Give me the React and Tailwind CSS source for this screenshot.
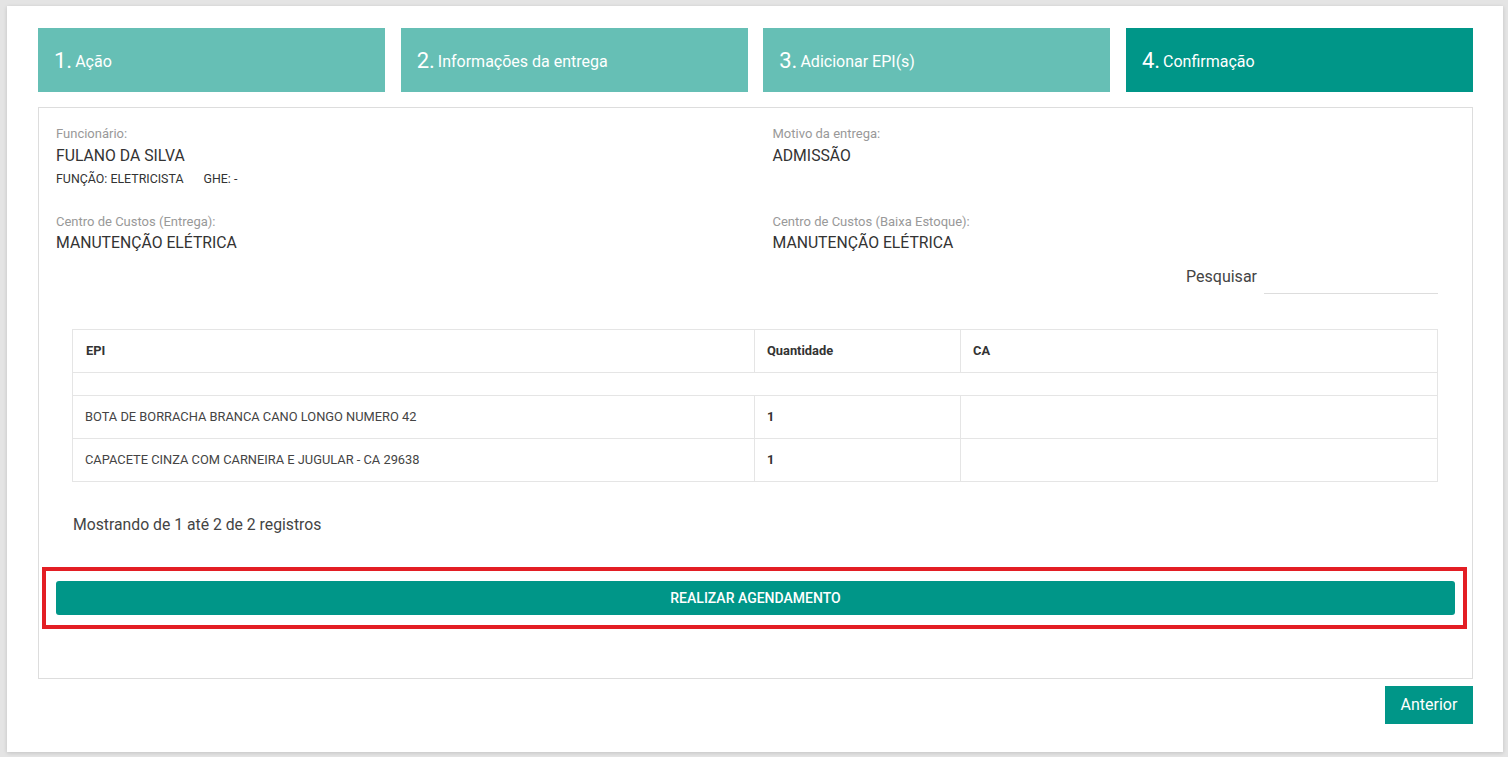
export default function App() {
  const steps = [
    { n: '1.', label: 'Ação', active: false },
    { n: '2.', label: 'Informações da entrega', active: false },
    { n: '3.', label: 'Adicionar EPI(s)', active: false },
    { n: '4.', label: 'Confirmação', active: true },
  ]
  const rows = [
    { epi: 'BOTA DE BORRACHA BRANCA CANO LONGO NUMERO 42', qtd: '1', ca: '' },
    { epi: 'CAPACETE CINZA COM CARNEIRA E JUGULAR - CA 29638', qtd: '1', ca: '' },
  ]

  return (
    <div className="min-h-[757px] bg-[#e4e4e4] pt-[6px] pl-[7px] pr-[5px] pb-[5px] font-['Roboto',sans-serif]">
      <div className="bg-white h-[746px] shadow-[0_1px_4px_rgba(0,0,0,0.15)] pt-[22px] pl-[31px] pr-[30px]">
        {/* steps */}
        <div className="grid grid-cols-4 gap-[15.5px]">
          {steps.map(s => (
            <div key={s.n} className={`h-[64px] flex items-center pl-[16px] pt-[1px] text-white ${s.active ? 'bg-[#009688]' : 'bg-[#66bfb5]'}`}>
              <span className="text-[22px] leading-none mr-[3px]">{s.n}</span>
              <span className="text-[16px] leading-none mt-[3px]">{s.label}</span>
            </div>
          ))}
        </div>

        {/* content */}
        <div className="mt-[15px] border border-[#dddddd] h-[572px] pt-[16px]">
          <div className="grid grid-cols-2">
            <div className="pl-[17px]">
              <div className="text-[13px] leading-[20px] text-[#999999]">Funcionário:</div>
              <div className="text-[15.75px] leading-[22px] text-[#333333] mt-[1px]">FULANO DA SILVA</div>
              <div className="text-[12.4px] leading-[16px] text-[#333333] mt-[4px] flex gap-[20px]">
                <span>FUNÇÃO: ELETRICISTA</span>
                <span>GHE: -</span>
              </div>
            </div>
            <div className="pl-[17px]">
              <div className="text-[13px] leading-[20px] text-[#999999]">Motivo da entrega:</div>
              <div className="text-[15.75px] leading-[22px] text-[#333333] mt-[1px]">ADMISSÃO</div>
            </div>
            <div className="pl-[17px] mt-[25px]">
              <div className="text-[13px] leading-[20px] text-[#999999]">Centro de Custos (Entrega):</div>
              <div className="text-[15.75px] leading-[22px] text-[#333333]">MANUTENÇÃO ELÉTRICA</div>
            </div>
            <div className="pl-[17px] mt-[25px]">
              <div className="text-[13px] leading-[20px] text-[#999999]">Centro de Custos (Baixa Estoque):</div>
              <div className="text-[15.75px] leading-[22px] text-[#333333]">MANUTENÇÃO ELÉTRICA</div>
            </div>
          </div>

          <div className="pl-[33px] pr-[34px]">
            <div className="flex justify-end items-center mt-[5px] h-[35px]">
              <label className="text-[16px] text-[#444444] mr-[7px]">Pesquisar</label>
              <input type="text" className="w-[174px] h-[35px] border-b border-[#dddddd] outline-none text-[14px]" />
            </div>

            <table className="w-full mt-[35px] border-collapse border border-[#e5e5e5] text-[12.85px] text-left">
              <thead>
                <tr className="h-[43px]">
                  <th className="w-[682px] px-[13px] font-bold text-[#333333] border border-[#e5e5e5]">EPI</th>
                  <th className="w-[206px] px-[12px] font-bold text-[#333333] border border-[#e5e5e5]">Quantidade</th>
                  <th className="px-[12px] font-bold text-[#333333] border border-[#e5e5e5]">CA</th>
                </tr>
              </thead>
              <tbody>
                <tr className="h-[23px]">
                  <td colSpan={3} className="border border-[#e5e5e5]"></td>
                </tr>
                {rows.map(r => (
                  <tr key={r.epi} className="h-[43px]">
                    <td className="px-[12px] text-[#444444] border border-[#e5e5e5]">{r.epi}</td>
                    <td className="px-[12px] font-bold text-[#333333] border border-[#e5e5e5]">{r.qtd}</td>
                    <td className="px-[12px] border border-[#e5e5e5]">{r.ca}</td>
                  </tr>
                ))}
              </tbody>
            </table>

            <div className="mt-[32px] pl-[1px] text-[15.75px] leading-[22px] text-[#444444]">Mostrando de 1 até 2 de 2 registros</div>
          </div>

          <div className="px-[17px] mt-[31px]">
            <div className="-ml-[14px] -mr-[12px] border-[4px] border-[#e31e24] pt-[10px] pb-[10px] pl-[10px] pr-[8px]">
              <button className="w-full h-[34px] rounded-[3px] bg-[#009688] text-white text-[14px] font-medium uppercase">
                Realizar agendamento
              </button>
            </div>
          </div>
        </div>

        <div className="flex justify-end mt-[7px]">
          <button className="w-[88px] h-[38px] bg-[#009688] text-white text-[16px]">Anterior</button>
        </div>
      </div>
    </div>
  )
}
